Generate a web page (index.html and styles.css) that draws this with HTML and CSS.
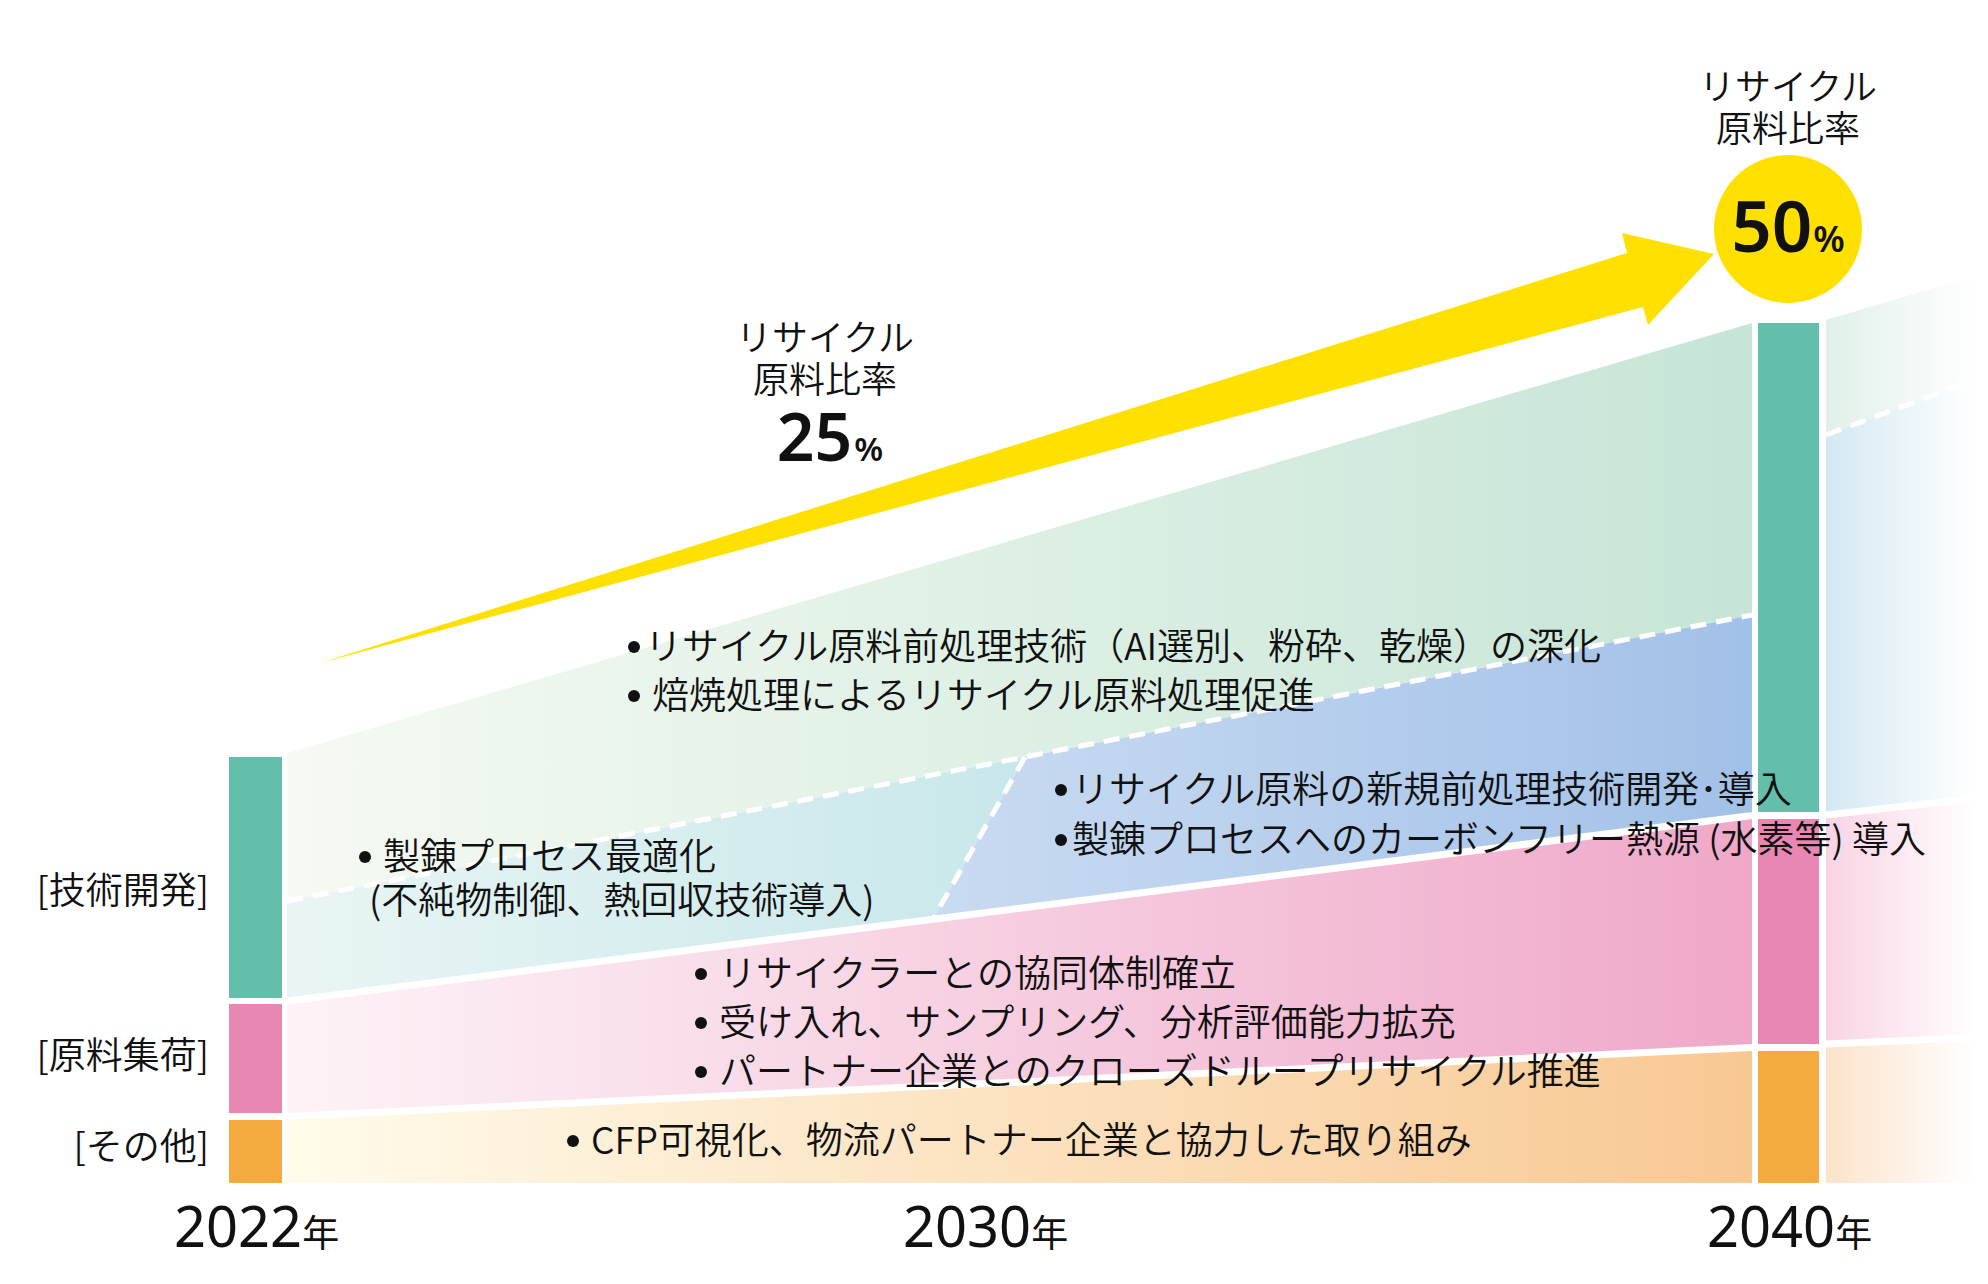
FILE: index.html
```html
<!DOCTYPE html>
<html lang="ja">
<head>
<meta charset="utf-8">
<title>リサイクル原料比率ロードマップ</title>
<link rel="stylesheet" href="styles.css">
</head>
<body>
<div class="chart">
  <svg class="plot" width="1988" height="1284" viewBox="0 0 1988 1284" aria-hidden="true">
    <defs>
      <linearGradient id="gGreen" gradientUnits="userSpaceOnUse" x1="287" y1="0" x2="1752" y2="0">
        <stop offset="0" stop-color="#F5FAF3"/><stop offset="1" stop-color="#C6E5D6"/>
      </linearGradient>
      <linearGradient id="gTeal" gradientUnits="userSpaceOnUse" x1="287" y1="0" x2="1030" y2="0">
        <stop offset="0" stop-color="#E9F5F4"/><stop offset="1" stop-color="#C8E7EA"/>
      </linearGradient>
      <linearGradient id="gBlue" gradientUnits="userSpaceOnUse" x1="933" y1="0" x2="1752" y2="0">
        <stop offset="0" stop-color="#C9DBF1"/><stop offset="1" stop-color="#A2C1E8"/>
      </linearGradient>
      <linearGradient id="gPink" gradientUnits="userSpaceOnUse" x1="287" y1="0" x2="1752" y2="0">
        <stop offset="0" stop-color="#FDF3F7"/><stop offset="1" stop-color="#EFA8C9"/>
      </linearGradient>
      <linearGradient id="gOrange" gradientUnits="userSpaceOnUse" x1="287" y1="0" x2="1752" y2="0">
        <stop offset="0" stop-color="#FFFBEB"/><stop offset="1" stop-color="#F8C893"/>
      </linearGradient>
      <linearGradient id="gGreenX" gradientUnits="userSpaceOnUse" x1="1826" y1="0" x2="1975" y2="0">
        <stop offset="0" stop-color="#E0F0E9"/><stop offset="1" stop-color="#FFFFFF"/>
      </linearGradient>
      <linearGradient id="gBlueX" gradientUnits="userSpaceOnUse" x1="1826" y1="0" x2="1975" y2="0">
        <stop offset="0" stop-color="#D3E9F2"/><stop offset="1" stop-color="#FFFFFF"/>
      </linearGradient>
      <linearGradient id="gPinkX" gradientUnits="userSpaceOnUse" x1="1826" y1="0" x2="1975" y2="0">
        <stop offset="0" stop-color="#F9D3E4"/><stop offset="1" stop-color="#FFFFFF"/>
      </linearGradient>
      <linearGradient id="gOrangeX" gradientUnits="userSpaceOnUse" x1="1826" y1="0" x2="1975" y2="0">
        <stop offset="0" stop-color="#FCE3CB"/><stop offset="1" stop-color="#FFFFFF"/>
      </linearGradient>
    </defs>

    <!-- bands between 2022 and 2040 -->
    <polygon points="287,753 1752,323 1752,615 287,901" fill="url(#gGreen)"/>
    <polygon points="287,901 1025,757 933,919 287,1001" fill="url(#gTeal)"/>
    <polygon points="1025,757 1752,615 1752,815.5 933,919" fill="url(#gBlue)"/>
    <polygon points="287,1001 1752,815.5 1752,1047.5 287,1116.5" fill="url(#gPink)"/>
    <polygon points="287,1116.5 1752,1047.5 1752,1183 287,1183" fill="url(#gOrange)"/>

    <!-- bands after 2040 -->
    <polygon points="1826,320 1988,272 1988,375 1826,435" fill="url(#gGreenX)"/>
    <polygon points="1826,435 1988,375 1988,797 1826,815" fill="url(#gBlueX)"/>
    <polygon points="1826,815 1988,797 1988,1037 1826,1044" fill="url(#gPinkX)"/>
    <polygon points="1826,1044 1988,1037 1988,1183 1826,1183" fill="url(#gOrangeX)"/>

    <!-- separators -->
    <g stroke="#FFFFFF" stroke-width="7" fill="none">
      <line x1="287" y1="1001" x2="1752" y2="815.5"/>
      <line x1="287" y1="1116.5" x2="1752" y2="1047.5"/>
      <line x1="1826" y1="815" x2="1988" y2="797"/>
      <line x1="1826" y1="1044" x2="1988" y2="1037"/>
    </g>
    <g stroke="#FFFFFF" stroke-width="5" fill="none" stroke-dasharray="16 10">
      <line x1="287" y1="901" x2="1752" y2="615"/>
      <line x1="1025" y1="757" x2="933" y2="919"/>
      <line x1="1826" y1="435" x2="1988" y2="375"/>
    </g>

    <!-- arrow -->
    <polygon points="320,663 1627,253 1622,233 1714,254 1648,325 1643,307" fill="#FFE000"/>

    <!-- 2022 bars -->
    <rect x="229" y="757" width="53" height="241" fill="#63BFA9"/>
    <rect x="229" y="1004" width="53" height="109" fill="#E987B3"/>
    <rect x="229" y="1120" width="53" height="63" fill="#F4AA3E"/>
    <!-- 2040 bars -->
    <rect x="1758" y="323" width="61" height="489" fill="#63BFA9"/>
    <rect x="1758" y="819" width="61" height="225" fill="#E987B3"/>
    <rect x="1758" y="1051" width="61" height="132" fill="#F4AA3E"/>
  </svg>

  <div class="badge"><span class="num">50</span><span class="pct">%</span></div>

  <div class="ratio ratio-top"><span class="line">リサイクル</span><span class="line">原料比率</span></div>
  <div class="ratio ratio-mid"><span class="line">リサイクル</span><span class="line">原料比率</span><span class="value"><span class="num">25</span><span class="pct">%</span></span></div>

  <ul class="list list-deep">
    <li class="tight">リサイクル原料前処理技術（AI選別、粉砕、乾燥）の深化</li>
    <li>焙焼処理によるリサイクル原料処理促進</li>
  </ul>
  <ul class="list list-new">
    <li class="tight">リサイクル原料の新規前処理技術開発･導入</li>
    <li class="tight">製錬プロセスへのカーボンフリー熱源 (水素等) 導入</li>
  </ul>
  <ul class="list list-smelt">
    <li>製錬プロセス最適化<span class="sub">(不純物制御、熱回収技術導入)</span></li>
  </ul>
  <ul class="list list-collect">
    <li>リサイクラーとの協同体制確立</li>
    <li>受け入れ、サンプリング、分析評価能力拡充</li>
    <li>パートナー企業とのクローズドループリサイクル推進</li>
  </ul>
  <ul class="list list-other">
    <li>CFP可視化、物流パートナー企業と協力した取り組み</li>
  </ul>

  <div class="axis-label l-tech">[技術開発]</div>
  <div class="axis-label l-collect">[原料集荷]</div>
  <div class="axis-label l-other">[その他]</div>

  <div class="year y2022">2022<span class="nen">年</span></div>
  <div class="year y2030">2030<span class="nen">年</span></div>
  <div class="year y2040">2040<span class="nen">年</span></div>
</div>
</body>
</html>
```

FILE: styles.css
```css
html, body {
  margin: 0;
  padding: 0;
  background: #ffffff;
}

body {
  font-family: "Noto Sans CJK JP", "Noto Sans", sans-serif;
  font-weight: 350;
  color: #111111;
}

.chart {
  position: relative;
  width: 1988px;
  height: 1284px;
  overflow: hidden;
}

.plot {
  position: absolute;
  left: 0;
  top: 0;
  display: block;
}

/* yellow 50% badge */
.badge {
  position: absolute;
  left: 1714px;
  top: 155px;
  width: 148px;
  height: 148px;
  border-radius: 50%;
  background: #FFE000;
  display: flex;
  align-items: baseline;
  justify-content: center;
  padding-top: 34px;
  box-sizing: border-box;
  font-family: "Noto Sans", "Noto Sans CJK JP", sans-serif;
  font-weight: 600;
  color: #111111;
}

.badge .num {
  font-size: 71px;
  line-height: 71px;
}

.badge .pct {
  font-size: 36px;
  line-height: 36px;
  margin-left: 1px;
}

/* ratio captions */
.ratio {
  position: absolute;
  display: flex;
  flex-direction: column;
  align-items: center;
  font-size: 36px;
  line-height: 42px;
  white-space: nowrap;
}

.ratio .line {
  display: block;
}

.ratio-top {
  left: 1698px;
  top: 63px;
  width: 180px;
}

.ratio-mid {
  left: 735px;
  top: 314px;
  width: 180px;
}

.ratio .value {
  display: flex;
  align-items: baseline;
  margin-top: 4px;
  padding-left: 10px;
  font-family: "Noto Sans", "Noto Sans CJK JP", sans-serif;
  font-weight: 600;
}

.ratio .value .num {
  font-size: 66px;
  line-height: 66px;
}

.ratio .value .pct {
  font-size: 33px;
  line-height: 33px;
  margin-left: 2px;
}

/* bullet lists */
.list {
  position: absolute;
  margin: 0;
  padding: 0;
  list-style: none;
  font-size: 37px;
  line-height: 49px;
  white-space: nowrap;
}

.list li::before {
  content: "";
  display: inline-block;
  width: 12px;
  height: 12px;
  border-radius: 50%;
  background: #111111;
  margin-right: 12px;
  vertical-align: 7px;
}

.list li.tight::before {
  margin-right: 5px;
}

.list .sub {
  display: block;
  margin-left: 10px;
}

.list-deep {
  left: 628px;
  top: 620px;
}

.list-new {
  left: 1055px;
  top: 762px;
  line-height: 50px;
}

.list-smelt {
  left: 359px;
  top: 832px;
  line-height: 44px;
}

.list-collect {
  left: 695px;
  top: 947px;
}

.list-other {
  left: 567px;
  top: 1114px;
}

/* category labels */
.axis-label {
  position: absolute;
  left: 20px;
  width: 189px;
  text-align: right;
  font-size: 37px;
  line-height: 49px;
  white-space: nowrap;
}

.l-tech { top: 864px; }
.l-collect { top: 1029px; }
.l-other { top: 1120px; }

/* years */
.year {
  position: absolute;
  top: 1197px;
  font-family: "Noto Sans", "Noto Sans CJK JP", sans-serif;
  font-weight: 400;
  font-size: 56px;
  line-height: 56px;
  white-space: nowrap;
}

.year .nen {
  font-family: "Noto Sans CJK JP", sans-serif;
  font-size: 37px;
  line-height: 1;
}

.y2022 { left: 174px; }
.y2030 { left: 903px; }
.y2040 { left: 1707px; }
```
